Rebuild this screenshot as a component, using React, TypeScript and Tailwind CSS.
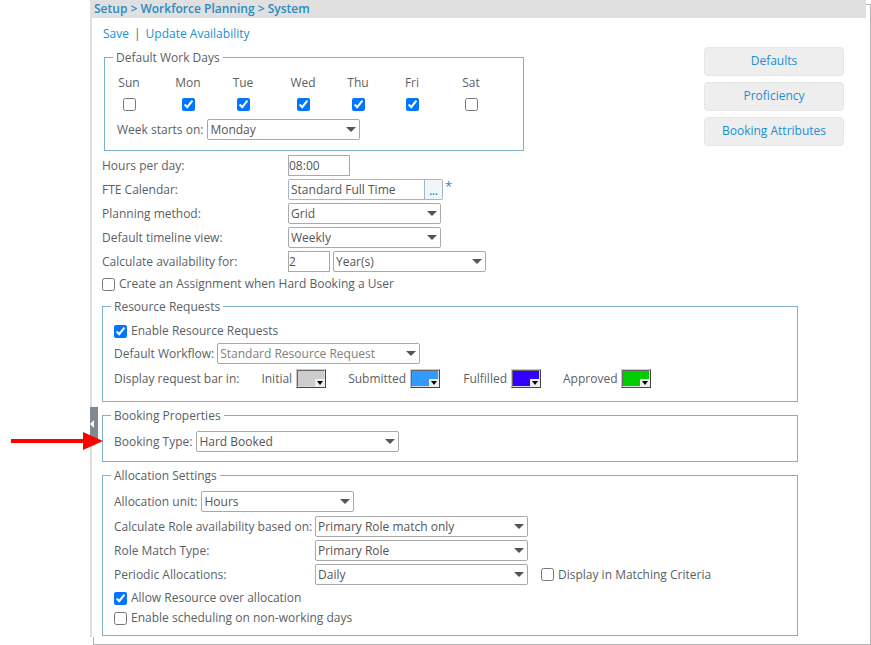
import type { ReactNode } from "react";

const labelFont = "font-['Open_Sans',sans-serif] text-[12px] leading-[16px] text-[#5a5f66]";

function Select({ value, width, className = "", muted = false }: { value: string; width: string; className?: string; muted?: boolean }) {
  return (
    <div className={`relative h-[21px] shrink-0 ${width} ${className}`}>
      <select
        defaultValue={value}
        className={`block h-full w-full appearance-none rounded-[2px] border border-[#a9a9a9] bg-white pl-[2px] font-['Open_Sans',sans-serif] text-[12px] ${muted ? "text-[#808080]" : "text-[#555]"}`}
      >
        <option>{value}</option>
      </select>
      <span className="pointer-events-none absolute right-[4px] top-[8px] h-0 w-0 border-x-[5.5px] border-t-[5px] border-x-transparent border-t-[#555]" />
    </div>
  );
}

function Check({ label, checked = false, className = "" }: { label: string; checked?: boolean; className?: string }) {
  return (
    <label className={`flex items-center ${labelFont} ${className}`}>
      <input type="checkbox" defaultChecked={checked} className="m-0 h-[13px] w-[13px]" />
      <span className="ml-[4px]">{label}</span>
    </label>
  );
}

function Box({ title, className = "", children }: { title: string; className?: string; children: ReactNode }) {
  return (
    <fieldset className={`border border-[#7fb0cf] px-[11px] ${className}`}>
      <legend className={`-ml-[3px] px-[3px] ${labelFont}`}>
        <span className="block translate-y-px">{title}</span>
      </legend>
      {children}
    </fieldset>
  );
}

function FormRow({ label, children, className = "" }: { label: string; children: ReactNode; className?: string }) {
  return (
    <div className={`flex h-[21px] items-center ${className}`}>
      <span className={`w-[186px] shrink-0 ${labelFont}`}>{label}</span>
      {children}
    </div>
  );
}

function Swatch({ label, color, className = "" }: { label: string; color: string; className?: string }) {
  return (
    <div className={`flex items-center ${className}`}>
      <span className={labelFont}>{label}</span>
      <div className="relative ml-[4px] h-[19px] w-[30px] border border-b-[#444] border-l-[#c8c8c8] border-r-[#444] border-t-[#c8c8c8]">
        <div className="h-full w-full border border-b-[#ddd] border-l-[#666] border-r-[#ddd] border-t-[#666]" style={{ backgroundColor: color }} />
        <span className="absolute bottom-0 right-0 flex h-[8px] w-[10px] items-center justify-center bg-[#eee]">
          <span className="h-0 w-0 border-x-[3.5px] border-t-[4px] border-x-transparent border-t-black" />
        </span>
      </div>
    </div>
  );
}

const days = [
  { name: "Sun", on: false },
  { name: "Mon", on: true },
  { name: "Tue", on: true },
  { name: "Wed", on: true },
  { name: "Thu", on: true },
  { name: "Fri", on: true },
  { name: "Sat", on: false },
];

export default function App() {
  return (
    <div className="relative h-[645px] w-[871px] overflow-hidden bg-white">
      {/* outer frame */}
      <div className="ml-[90px] h-[637px] w-[781px] border-l-2 border-[#e0e0e0]">
        <div className="flex h-[18px] w-[774px] items-center bg-[#e0e0e0] pl-[2px] font-['Open_Sans',sans-serif] text-[12px] font-semibold text-[#2a8bbf]">
          Setup &gt; Workforce Planning &gt; System
        </div>

        {/* links, work days and side buttons */}
        <div className="flex items-start">
          <div className="pl-[12px]">
            <div className="-ml-px flex h-[31px] items-center pt-[1px] font-['Open_Sans',sans-serif] text-[12px] text-[#1a8fd0]">
              <a>Save</a>
              <span className="mx-[5px] text-[#5a5f66]">|</span>
              <a>Update Availability</a>
            </div>
            <Box title="Default Work Days" className="h-[102px] w-[420px]">
              <div className="grid grid-cols-[59px_55px_60px_55px_54px_59px_26px] pt-[10px]">
                {days.map((d) => (
                  <div key={d.name} className="flex w-[26px] flex-col items-center">
                    <span className={labelFont}>{d.name}</span>
                    <input type="checkbox" defaultChecked={d.on} className="m-0 mt-[7px] h-[13px] w-[13px]" />
                  </div>
                ))}
              </div>
              <div className="mt-[8px] flex items-center pl-px">
                <span className={labelFont}>Week starts on:</span>
                <Select value="Monday" width="w-[153px]" className="ml-[4px]" />
              </div>
            </Box>
          </div>
          <div className="ml-[180px] mt-[29px] flex w-[140px] flex-col gap-[6px]">
            {["Defaults", "Proficiency", "Booking Attributes"].map((b) => (
              <button key={b} className="h-[29px] rounded-[4px] border border-[#e6e6e6] bg-[#eeeeee] pb-[2px] font-['Open_Sans',sans-serif] text-[12px] text-[#1a8fd0]">
                {b}
              </button>
            ))}
          </div>
        </div>

        {/* general settings */}
        <div className="mt-[4px] flex flex-col gap-[3px] pl-[10px]">
          <FormRow label="Hours per day:">
            <input defaultValue="08:00" className="h-[21px] w-[62px] border border-[#a9a9a9] font-['Open_Sans',sans-serif] text-[12px] text-[#555]" />
          </FormRow>
          <FormRow label="FTE Calendar:">
            <div className="flex h-[21px] w-[155px] rounded-[2px] border border-[#9fb9cc]">
              <span className="flex-1 pl-[2px] font-['Open_Sans',sans-serif] text-[12px] leading-[19px] text-[#555]">Standard Full Time</span>
              <span className="w-[18px] border-l border-[#9fb9cc] bg-[#f2f6f9] text-center font-['Open_Sans',sans-serif] text-[10px] font-bold leading-[22px] text-[#2a8bbf]">...</span>
            </div>
            <span className="ml-[2px] self-start font-['Open_Sans',sans-serif] text-[13px] leading-[14px] text-[#2a8bbf]">*</span>
          </FormRow>
          <FormRow label="Planning method:">
            <Select value="Grid" width="w-[153px]" />
          </FormRow>
          <FormRow label="Default timeline view:">
            <Select value="Weekly" width="w-[153px]" />
          </FormRow>
          <FormRow label="Calculate availability for:">
            <input defaultValue="2" className="h-[21px] w-[42px] border border-[#a9a9a9] font-['Open_Sans',sans-serif] text-[12px] text-[#555]" />
            <Select value="Year(s)" width="w-[153px]" className="ml-[3px]" />
          </FormRow>
          <Check label="Create an Assignment when Hard Booking a User" className="mt-px" />
        </div>

        {/* resource requests */}
        <div className="ml-[10px] mt-[6px] flex w-[696px] flex-col">
          <Box title="Resource Requests" className="h-[104px]">
            <Check label="Enable Resource Requests" checked className="mt-[9px]" />
            <div className="mt-[4px] flex items-center">
              <span className={labelFont}>Default Workflow:</span>
              <Select value="Standard Resource Request" width="w-[203px]" className="ml-[3px]" muted />
            </div>
            <div className="mt-[5px] flex items-center">
              <span className={labelFont}>Display request bar in:</span>
              <Swatch label="Initial" color="#cccccc" className="ml-[22px]" />
              <Swatch label="Submitted" color="#3399ff" className="ml-[22px]" />
              <Swatch label="Fulfilled" color="#3300ff" className="ml-[23px]" />
              <Swatch label="Approved" color="#00cc00" className="ml-[22px]" />
            </div>
          </Box>

          <Box title="Booking Properties" className="mt-[5px] h-[55px]">
            <div className="mt-[8px] flex items-center">
              <span className={labelFont}>Booking Type:</span>
              <Select value="Hard Booked" width="w-[203px]" className="ml-[4px]" />
            </div>
          </Box>

          <Box title="Allocation Settings" className="mt-[5px] h-[169px]">
            <div className="mt-[8px] flex items-center">
              <span className={labelFont}>Allocation unit:</span>
              <Select value="Hours" width="w-[153px]" className="ml-[4px]" />
            </div>
            <div className="mt-[4px] flex flex-col gap-[3px]">
              <div className="flex items-center">
                <span className={`w-[201px] ${labelFont}`}>Calculate Role availability based on:</span>
                <Select value="Primary Role match only" width="w-[213px]" />
              </div>
              <div className="flex items-center">
                <span className={`w-[201px] ${labelFont}`}>Role Match Type:</span>
                <Select value="Primary Role" width="w-[213px]" />
              </div>
              <div className="flex items-center">
                <span className={`w-[201px] ${labelFont}`}>Periodic Allocations:</span>
                <Select value="Daily" width="w-[213px]" />
                <Check label="Display in Matching Criteria" className="ml-[13px]" />
              </div>
            </div>
            <Check label="Allow Resource over allocation" checked className="mt-[5px]" />
            <Check label="Enable scheduling on non-working days" className="mt-[4px]" />
          </Box>
        </div>
      </div>

      {/* frame lines */}
      <div className="absolute left-[866px] top-[4px] h-[641px] w-[5px] border-r border-t border-[#b5b5b5]" />
      <div className="absolute bottom-0 left-[93px] h-[8px] w-[777px] border-b border-l border-[#b5b5b5]" />

      {/* collapse handle */}
      <div className="absolute left-[90px] top-[407px] flex h-[33px] w-[8px] items-center bg-[#808890]">
        <span className="h-0 w-0 border-y-[4px] border-r-[4px] border-y-transparent border-r-white" />
      </div>

      {/* red arrow */}
      <svg className="absolute left-[11px] top-[431px]" width="93" height="20" viewBox="0 0 93 20">
        <path d="M0 8h72V1l20 9-20 9v-7H0z" fill="#ff0000" />
      </svg>
    </div>
  );
}
